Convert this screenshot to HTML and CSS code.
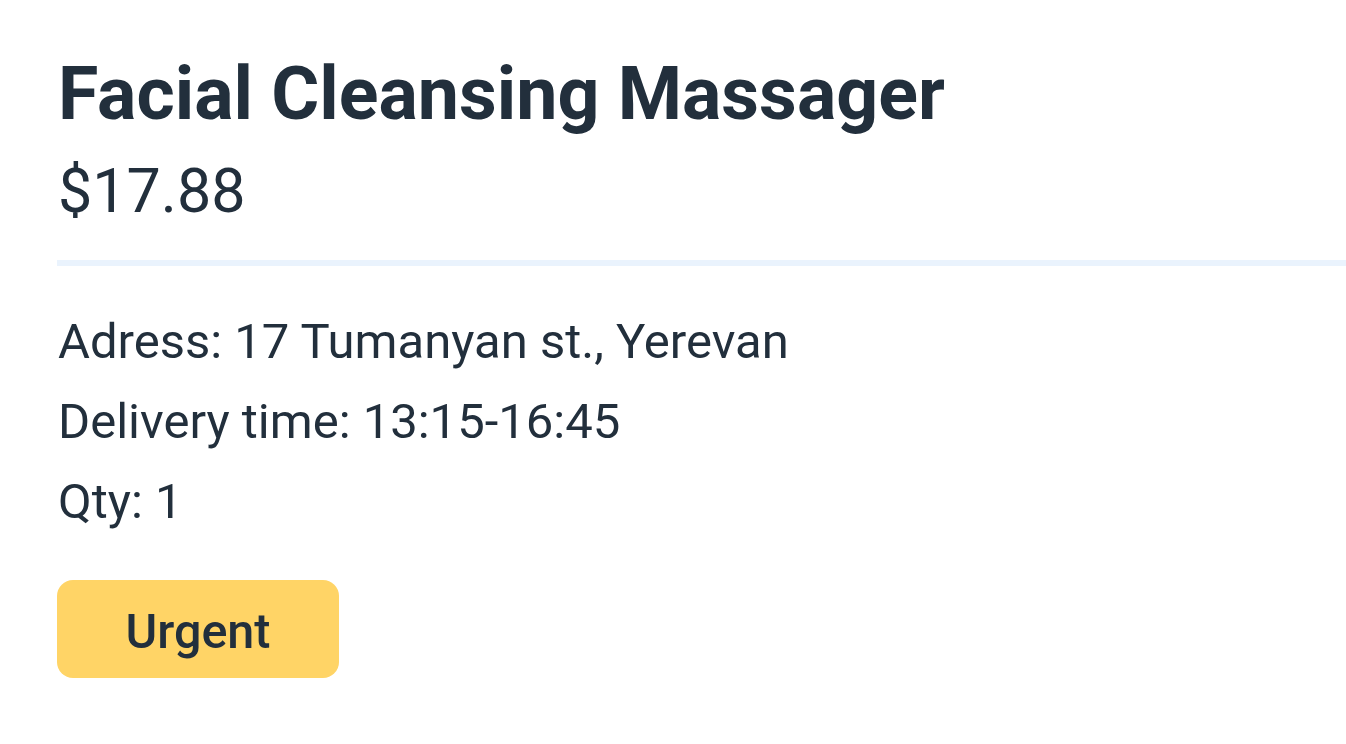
FILE: index.html
```html
<!DOCTYPE html>
<html lang="en">
<head>
<meta charset="utf-8">
<title>Order</title>
<link rel="stylesheet" href="styles.css">
</head>
<body>
<main class="order">
  <h1 class="order-title">Facial Cleansing Massager</h1>
  <div class="order-price">$17.88</div>
  <hr class="order-divider">
  <ul class="order-details">
    <li>Adress: 17 Tumanyan st., Yerevan</li>
    <li>Delivery time: 13:15-16:45</li>
    <li>Qty: 1</li>
  </ul>
  <span class="badge-urgent">Urgent</span>
</main>
</body>
</html>
```
FILE: styles.css
```css
html, body {
  margin: 0;
  padding: 0;
  background: #ffffff;
}
body {
  font-family: Roboto, "Liberation Sans", sans-serif;
  color: #222f3c;
}
.order {
  padding: 48px 0 0 58px;
  display: flex;
  flex-direction: column;
  align-items: flex-start;
}
.order-title {
  margin: 0;
  font-size: 73.5px;
  font-weight: 700;
  line-height: 92px;
}
.order-price {
  margin-top: 14px;
  font-size: 61px;
  font-weight: 400;
  line-height: 74px;
}
.order-divider {
  align-self: stretch;
  margin: 32px 0 0 -1px;
  height: 6px;
  border: 0;
  background: #eaf3fd;
}
.order-details {
  list-style: none;
  margin: 36px 0 0;
  padding: 0;
  font-size: 49px;
  line-height: 80px;
}
.badge-urgent {
  box-sizing: border-box;
  margin: 38px 0 0 -1px;
  width: 282px;
  height: 98px;
  padding-top: 5px;
  border-radius: 16px;
  background: #ffd466;
  display: flex;
  align-items: center;
  justify-content: center;
  font-size: 48.5px;
  font-weight: 500;
}
```
